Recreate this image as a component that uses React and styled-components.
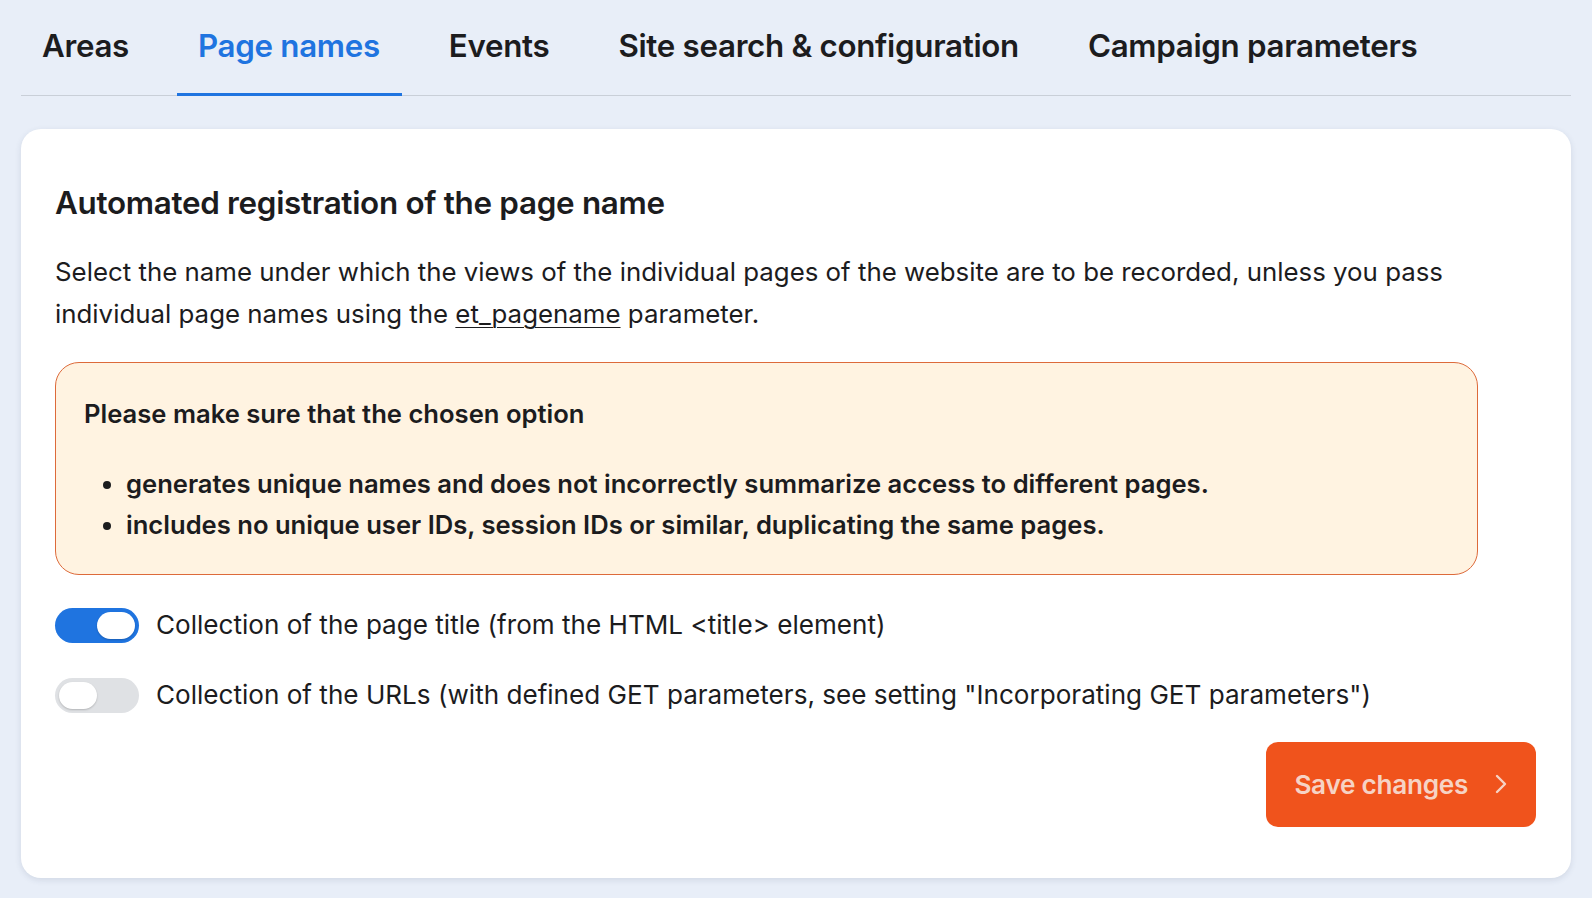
import React, { useState } from 'react';
import styled, { createGlobalStyle } from 'styled-components';

const GlobalStyle = createGlobalStyle`
   body {
      margin: 0;
      background: #e8eef8;
      font-family: Inter, "Noto Sans", sans-serif;
      color: #1c1c1e;
   }
`;

const Page = styled.div`
   padding: 0 21px 20px;
`;

const TabBar = styled.nav`
   display: flex;
   gap: 26px;
   border-bottom: 1px solid #c9cfd8;
`;

const Tab = styled.div`
   display: flex;
   align-items: center;
   box-sizing: border-box;
   height: 96px;
   padding: 0 22px 2px 21px;
   margin-bottom: -1px;
   font-size: 31.3px;
   font-weight: 600;
   letter-spacing: -0.3px;
   color: ${(p) => (p.active ? '#1f74e0' : '#1c1c1e')};
   border-bottom: 3px solid ${(p) => (p.active ? '#1f74e0' : 'transparent')};
   cursor: pointer;
`;

const Card = styled.section`
   margin-top: 33px;
   background: #fff;
   border-radius: 20px;
   box-shadow: 0 2px 6px rgba(40, 60, 90, 0.12);
   padding: 53px 35px 51px 34px;
`;

const Title = styled.h2`
   margin: 0;
   font-size: 31.4px;
   font-weight: 600;
   letter-spacing: -0.3px;
   line-height: 42px;
`;

const Text = styled.p`
   margin: 27px 0 0;
   font-size: 25.85px;
   line-height: 41.6px;
   font-weight: 400;
`;

const Code = styled.span`
   text-decoration: underline;
   text-underline-offset: 4px;
   text-decoration-thickness: 1px;
`;

const Notice = styled.div`
   margin: 28px 58px 0 0;
   background: #fff3e1;
   border: 1.5px solid #dd6a3a;
   border-radius: 24px;
   padding: 30px 28px 28px;
   font-size: 25.6px;
   font-weight: 600;
   line-height: 41.6px;
`;

const NoticeList = styled.ul`
   margin: 28px 0 0;
   padding-left: 42px;
`;

const Options = styled.div`
   display: flex;
   flex-direction: column;
   gap: 35px;
   margin-top: 33px;
`;

const OptionRow = styled.label`
   display: flex;
   align-items: center;
   gap: 17px;
   font-size: 26.1px;
   line-height: 34px;
   cursor: pointer;
`;

const Switch = styled.span`
   position: relative;
   width: 84px;
   height: 35px;
   border-radius: 18px;
   flex-shrink: 0;
   background: ${(p) => (p.on ? '#1f74e0' : '#dfe1e4')};
   &::after {
      content: '';
      position: absolute;
      top: 4px;
      left: ${(p) => (p.on ? '42px' : '4px')};
      width: 38px;
      height: 27px;
      border-radius: 14px;
      background: #fff;
      box-shadow: 0 1px 2px rgba(0, 0, 0, 0.2);
   }
`;

const Footer = styled.div`
   display: flex;
   justify-content: flex-end;
   margin-top: 29px;
`;

const SaveButton = styled.button`
   display: flex;
   align-items: center;
   gap: 26px;
   height: 85px;
   padding: 0 28px;
   border: none;
   border-radius: 12px;
   background: #f0531c;
   color: #f6d3c5;
   font-family: inherit;
   font-size: 26.2px;
   font-weight: 600;
   letter-spacing: -0.3px;
   cursor: pointer;
`;

const tabs = ['Areas', 'Page names', 'Events', 'Site search & configuration', 'Campaign parameters'];

const App = () => {
   const [title, setTitle] = useState(true);
   const [urls, setUrls] = useState(false);
   return (
      <Page>
         <GlobalStyle />
         <TabBar>
            {tabs.map((t) => (
               <Tab key={t} active={t === 'Page names'}>
                  {t}
               </Tab>
            ))}
         </TabBar>
         <Card>
            <Title>Automated registration of the page name</Title>
            <Text>
               Select the name under which the views of the individual pages of the website are to be recorded, unless you pass
               individual page names using the <Code>et_pagename</Code> parameter.
            </Text>
            <Notice>
               Please make sure that the chosen option
               <NoticeList>
                  <li>generates unique names and does not incorrectly summarize access to different pages.</li>
                  <li>includes no unique user IDs, session IDs or similar, duplicating the same pages.</li>
               </NoticeList>
            </Notice>
            <Options>
               <OptionRow onClick={() => setTitle(!title)}>
                  <Switch on={title ? 1 : 0} />
                  Collection of the page title (from the HTML &lt;title&gt; element)
               </OptionRow>
               <OptionRow onClick={() => setUrls(!urls)}>
                  <Switch on={urls ? 1 : 0} />
                  Collection of the URLs (with defined GET parameters, see setting "Incorporating GET parameters")
               </OptionRow>
            </Options>
            <Footer>
               <SaveButton>
                  Save changes
                  <svg width="14" height="22" viewBox="0 0 14 22" fill="none">
                     <path d="M3 3l8 8-8 8" stroke="currentColor" strokeWidth="2.4" strokeLinecap="round" strokeLinejoin="round" />
                  </svg>
               </SaveButton>
            </Footer>
         </Card>
      </Page>
   );
};

export default App;
